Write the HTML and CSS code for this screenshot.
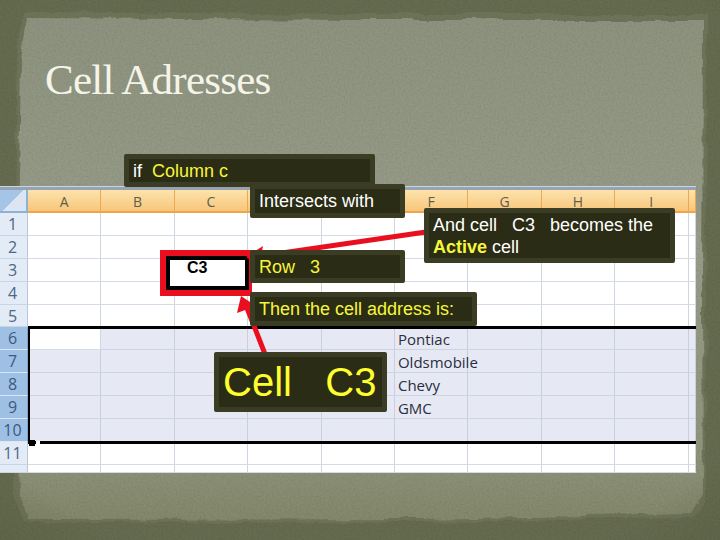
FILE: index.html
```html
<!DOCTYPE html>
<html lang="en">
<head>
<meta charset="utf-8">
<title>Cell Adresses</title>
<link rel="stylesheet" href="styles.css">
</head>
<body>
<main class="slide">
  <svg class="backdrop" width="720" height="540" viewBox="0 0 720 540" aria-hidden="true">
    <defs>
      <filter id="grain" x="0" y="0" width="100%" height="100%" color-interpolation-filters="sRGB">
        <feTurbulence type="fractalNoise" baseFrequency="0.5" numOctaves="4" seed="4"/>
        <feColorMatrix type="matrix" values="0 0 0 0 0  0 0 0 0 0  0 0 0 0 0  1.1 0 0 0 -0.38"/>
      </filter>
      <filter id="torn" x="-5%" y="-5%" width="110%" height="110%" color-interpolation-filters="sRGB">
        <feTurbulence type="fractalNoise" baseFrequency="0.03" numOctaves="4" seed="9" result="n"/>
        <feDisplacementMap in="SourceGraphic" in2="n" scale="8" xChannelSelector="R" yChannelSelector="G"/>
      </filter>
      <linearGradient id="paper" x1="0" y1="0" x2="0" y2="1">
        <stop offset="0" stop-color="#8e9380"/>
        <stop offset="0.45" stop-color="#989d8a"/>
        <stop offset="0.85" stop-color="#90957d"/>
        <stop offset="1" stop-color="#84896c"/>
      </linearGradient>
      <radialGradient id="vignette" cx="0.5" cy="0.45" r="0.75">
        <stop offset="0.85" stop-color="#4f5539" stop-opacity="0"/>
        <stop offset="1" stop-color="#4f5539" stop-opacity="0.3"/>
      </radialGradient>
    </defs>
    <rect width="720" height="540" fill="#666c50"/>
    <path d="M23 12 L360 14 L707 14 L706 300 L705 502 L693 518 L420 522 L22 523 L14 500 L14 300 L17 60 Z" fill="#6f7459" filter="url(#torn)"/>
    <path d="M27 18 L360 20 L703 20 L702 300 L703 494 L691 514 L420 519 L26 520 L20 500 L17 300 L21 60 Z" fill="url(#paper)" filter="url(#torn)"/>
    <rect width="720" height="540" fill="url(#vignette)"/>
    <rect width="720" height="540" filter="url(#grain)" opacity="0.12"/>
  </svg>

  <h1 class="title">Cell Adresses</h1>

  <section class="sheet">
    <div class="sheet-rim"></div>
    <div class="grid">
      <div class="corner"></div>
      <div class="col">A</div><div class="col">B</div><div class="col">C</div><div class="col"></div><div class="col"></div><div class="col">F</div><div class="col">G</div><div class="col">H</div><div class="col">I</div><div class="col"></div>

      <div class="row">1</div><div class="cell"></div><div class="cell"></div><div class="cell"></div><div class="cell"></div><div class="cell"></div><div class="cell"></div><div class="cell"></div><div class="cell"></div><div class="cell"></div><div class="cell"></div>
      <div class="row">2</div><div class="cell"></div><div class="cell"></div><div class="cell"></div><div class="cell"></div><div class="cell"></div><div class="cell"></div><div class="cell"></div><div class="cell"></div><div class="cell"></div><div class="cell"></div>
      <div class="row">3</div><div class="cell"></div><div class="cell"></div><div class="cell"></div><div class="cell"></div><div class="cell"></div><div class="cell"></div><div class="cell"></div><div class="cell"></div><div class="cell"></div><div class="cell"></div>
      <div class="row">4</div><div class="cell"></div><div class="cell"></div><div class="cell"></div><div class="cell"></div><div class="cell"></div><div class="cell"></div><div class="cell"></div><div class="cell"></div><div class="cell"></div><div class="cell"></div>
      <div class="row">5</div><div class="cell"></div><div class="cell"></div><div class="cell"></div><div class="cell"></div><div class="cell"></div><div class="cell"></div><div class="cell"></div><div class="cell"></div><div class="cell"></div><div class="cell"></div>

      <div class="row on">6</div><div class="cell"></div><div class="cell sel"></div><div class="cell sel"></div><div class="cell sel"></div><div class="cell sel"></div><div class="cell sel car">Pontiac</div><div class="cell sel"></div><div class="cell sel"></div><div class="cell sel"></div><div class="cell sel"></div>
      <div class="row on">7</div><div class="cell sel"></div><div class="cell sel"></div><div class="cell sel"></div><div class="cell sel"></div><div class="cell sel"></div><div class="cell sel car">Oldsmobile</div><div class="cell sel"></div><div class="cell sel"></div><div class="cell sel"></div><div class="cell sel"></div>
      <div class="row on">8</div><div class="cell sel"></div><div class="cell sel"></div><div class="cell sel"></div><div class="cell sel"></div><div class="cell sel"></div><div class="cell sel car">Chevy</div><div class="cell sel"></div><div class="cell sel"></div><div class="cell sel"></div><div class="cell sel"></div>
      <div class="row on">9</div><div class="cell sel"></div><div class="cell sel"></div><div class="cell sel"></div><div class="cell sel"></div><div class="cell sel"></div><div class="cell sel car">GMC</div><div class="cell sel"></div><div class="cell sel"></div><div class="cell sel"></div><div class="cell sel"></div>
      <div class="row on">10</div><div class="cell sel"></div><div class="cell sel"></div><div class="cell sel"></div><div class="cell sel"></div><div class="cell sel"></div><div class="cell sel"></div><div class="cell sel"></div><div class="cell sel"></div><div class="cell sel"></div><div class="cell sel"></div>

      <div class="row">11</div><div class="cell"></div><div class="cell"></div><div class="cell"></div><div class="cell"></div><div class="cell"></div><div class="cell"></div><div class="cell"></div><div class="cell"></div><div class="cell"></div><div class="cell"></div>
      <div class="row"></div><div class="cell"></div><div class="cell"></div><div class="cell"></div><div class="cell"></div><div class="cell"></div><div class="cell"></div><div class="cell"></div><div class="cell"></div><div class="cell"></div><div class="cell"></div>
    </div>
  </section>

  <div class="selection"></div>
  <div class="handle"></div>

  <div class="active-ring"><div class="active-cell">C3</div></div>

  <svg class="arrows" width="720" height="540" viewBox="0 0 720 540" aria-hidden="true">
    <path class="shaft" d="M426 232 L254 257"/>
    <path class="head" d="M246 257 L263 246 L259 266 Z"/>
    <path class="shaft" d="M265 354 L247 308"/>
    <path class="head" d="M241 296 L237 313 L256 306 Z"/>
  </svg>

  <div class="note note-column"><span class="wht">if  </span>Column c</div>
  <div class="note note-intersects wht">Intersects with</div>
  <div class="note note-row">Row   3</div>
  <div class="note note-then">Then the cell address is:</div>
  <div class="note note-active wht">And cell   C3   becomes the<br><b class="ylw">Active</b> cell</div>
  <div class="note note-cell">Cell   C3</div>
</main>
</body>
</html>
```

FILE: styles.css
```css
* { box-sizing: border-box; }

html, body {
  margin: 0;
  padding: 0;
}

body {
  width: 720px;
  height: 540px;
  overflow: hidden;
  background: #666c50;
}

.slide {
  position: relative;
  width: 720px;
  height: 540px;
  overflow: hidden;
}

.backdrop,
.arrows {
  position: absolute;
  left: 0;
  top: 0;
  display: block;
}

.title {
  position: relative;
  height: 186px;
  margin: 0;
  padding: 55px 0 0 45px;
  font: 400 43px/50px "Liberation Serif", serif;
  letter-spacing: -0.75px;
  color: #f4f4e8;
}

.sheet {
  position: relative;
  width: 696px;
}

.sheet-rim {
  height: 4px;
  background: #98a3b2;
  border-top: 1px solid #c6d6e8;
}

.grid {
  display: grid;
  grid-template-columns: 28px repeat(9, 73.4px) 7.4px;
  grid-template-rows: 23px repeat(11, 22.9px) 8px;
  font-family: "Open Sans", sans-serif;
}

.corner {
  background: linear-gradient(135deg, #a5c4e6 50%, #dbe6f2 50%);
  border-right: 2px solid #8eb1d8;
  border-bottom: 2px solid #8eb1d8;
}

.col {
  display: flex;
  align-items: center;
  justify-content: center;
  padding-top: 1px;
  font-size: 14px;
  color: #5f5d4c;
  background: linear-gradient(#fde3ab, #f7c67c);
  border-right: 1px solid #eea84f;
  border-bottom: 2px solid #f0a445;
}

.row {
  display: flex;
  align-items: center;
  justify-content: center;
  padding-right: 2px;
  font-size: 16px;
  color: #4d6784;
  background: #e3ebf6;
  border-right: 1px solid #b9c8da;
  border-bottom: 1px solid #c8d5e6;
}

.row.on {
  background: #9ec0e4;
  color: #3c5a7a;
  border-right-color: #7fa3cb;
  border-bottom-color: #dbe7f4;
}

.cell {
  padding-left: 3px;
  font-size: 15px;
  line-height: 25px;
  color: #2b2d40;
  white-space: nowrap;
  background: #fff;
  border-right: 1px solid #cfd6e2;
  border-bottom: 1px solid #d5dbe6;
}

.cell.sel {
  background: #e6e9f4;
  border-right-color: #c9cfde;
  border-bottom-color: #cdd3e2;
}

.cell.car {
  position: relative;
}

.selection {
  position: absolute;
  left: 28px;
  top: 326px;
  width: 668px;
  height: 118px;
  border-top: 3px solid #000;
  border-bottom: 3px solid #000;
  border-left: 2px solid #000;
}

.handle {
  position: absolute;
  left: 29px;
  top: 440px;
  width: 6px;
  height: 6px;
  background: #000;
  box-shadow: 6px 0 0 -1px #fff;
}

.active-ring {
  position: absolute;
  left: 160px;
  top: 250px;
  width: 92px;
  height: 46px;
  background: #ea0f1f;
  padding: 6px 3px 6px 6px;
}

.active-cell {
  height: 100%;
  padding: 1px 0 0 17px;
  background: #fff;
  border: 4px solid #000;
  font: 700 16px/14px "Liberation Sans", sans-serif;
  color: #000;
}

.shaft {
  fill: none;
  stroke: #ea0f1f;
  stroke-width: 5;
}

.head {
  fill: #ea0f1f;
}

.note {
  position: absolute;
  padding: 1px 0 0 4px;
  font: 400 18px/22px "Liberation Sans", sans-serif;
  color: #f6f63c;
  white-space: pre;
  background: #2a2c15;
  border: 5px solid #3a3d24;
  border-radius: 2px;
}

.wht { color: #fff; }
.ylw { color: #f6f63c; }

.note-column {
  left: 124px;
  top: 154px;
  width: 251px;
  height: 33px;
}

.note-intersects {
  left: 250px;
  top: 184px;
  width: 155px;
  height: 34px;
}

.note-row {
  left: 250px;
  top: 250px;
  width: 155px;
  height: 33px;
}

.note-then {
  left: 250px;
  top: 292px;
  width: 227px;
  height: 34px;
}

.note-active {
  left: 424px;
  top: 208px;
  width: 251px;
  height: 55px;
}

.note-cell {
  left: 214px;
  top: 352px;
  width: 173px;
  height: 60px;
  padding: 0 0 0 4px;
  font-size: 40px;
  line-height: 50px;
  color: #ffff2e;
}
```
